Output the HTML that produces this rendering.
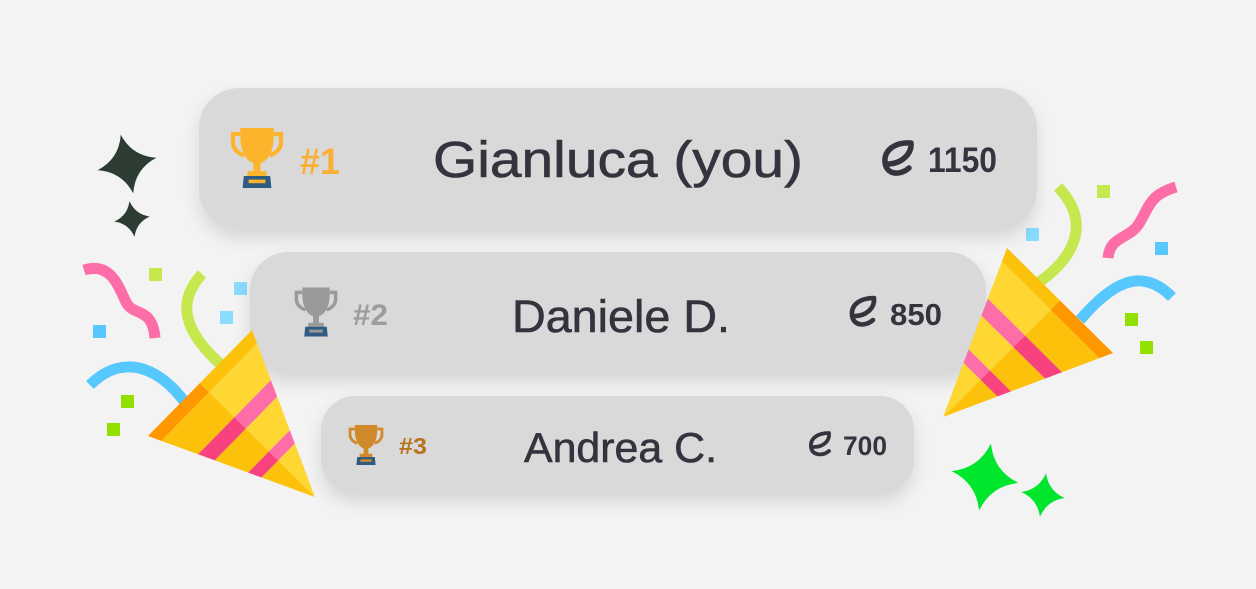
<!DOCTYPE html>
<html><head><meta charset="utf-8"><style>
html,body{margin:0;padding:0;background:#f3f3f3;width:1256px;height:589px;overflow:hidden}
svg{display:block}
</style></head><body>
<svg width="1256" height="589" viewBox="0 0 1256 589" xmlns="http://www.w3.org/2000/svg" font-family="Liberation Sans, sans-serif">
<defs>
<filter id="sh" x="-10%" y="-30%" width="120%" height="170%">
<feDropShadow dx="0" dy="8" stdDeviation="8" flood-color="#000" flood-opacity="0.12"/>
</filter>
<path id="star" d="M0,-1 Q0.22,-0.22 1,0 Q0.22,0.22 0,1 Q-0.22,0.22 -1,0 Q-0.22,-0.22 0,-1Z"/>
</defs>
<rect width="1256" height="589" fill="#f3f3f3"/>

<!-- left decorations -->
<use href="#star" transform="translate(127,164) rotate(-12) scale(30)" fill="#2d3c33"/>
<use href="#star" transform="translate(132,219) rotate(-8) scale(18)" fill="#2d3c33"/>
<path d="M84,270 C110,262 118,285 125,300 C132,318 152,305 155,338" fill="none" stroke="#fd6ea8" stroke-width="11"/>
<path d="M202,274 C178,300 180,330 225,368" fill="none" stroke="#c6e84e" stroke-width="11"/>
<path d="M90,385 C125,350 165,370 190,410" fill="none" stroke="#56c8fe" stroke-width="11"/>
<rect x="149" y="268" width="13" height="13" fill="#c6e84e"/>
<rect x="93" y="325" width="13" height="13" fill="#56c8fe"/>
<rect x="234" y="282" width="13" height="13" fill="#88dcff"/>
<rect x="220" y="311" width="13" height="13" fill="#88dcff"/>
<rect x="121" y="395" width="13" height="13" fill="#92e000"/>
<rect x="107" y="423" width="13" height="13" fill="#92e000"/>

<!-- right decorations -->
<use href="#star" transform="translate(985,477) rotate(10) scale(34)" fill="#00e62c"/>
<use href="#star" transform="translate(1043,495) rotate(8) scale(22)" fill="#00e62c"/>
<path d="M1058,187 C1085,215 1085,250 1038,283" fill="none" stroke="#c6e84e" stroke-width="11"/>
<path d="M1176,187 C1150,195 1150,205 1140,222 C1130,240 1110,235 1108,258" fill="none" stroke="#fd6ea8" stroke-width="11"/>
<path d="M1172,297 C1140,265 1110,285 1080,320" fill="none" stroke="#56c8fe" stroke-width="11"/>
<rect x="1012" y="199" width="13" height="13" fill="#88dcff"/>
<rect x="1026" y="228" width="13" height="13" fill="#88dcff"/>
<rect x="1097" y="185" width="13" height="13" fill="#c6e84e"/>
<rect x="1155" y="242" width="13" height="13" fill="#56c8fe"/>
<rect x="1125" y="313" width="13" height="13" fill="#92e000"/>
<rect x="1140" y="341" width="13" height="13" fill="#92e000"/>

<!-- cards -->
<rect x="199" y="88" width="838" height="142" rx="40" fill="#d9d9d9" filter="url(#sh)"/>
<rect x="250" y="252" width="736" height="122" rx="38" fill="#d9d9d9" filter="url(#sh)"/>
<rect x="321" y="396" width="593" height="98" rx="34" fill="#d9d9d9" filter="url(#sh)"/>

<g id="coneL"></g>
<g id="coneR"></g>

<!-- trophies -->
<g transform="translate(257,158) scale(1.2)">
<path d="M-14,-25 h28 v6 q0,18 -10,23 h-8 q-10,-5 -10,-23z" fill="#fdb42d"/>
<path d="M-14,-20 h-6 v7 q0,7 9,11 M14,-20 h6 v7 q0,7 -9,11" fill="none" stroke="#fdb42d" stroke-width="3.5"/>
<rect x="-3" y="3" width="6" height="9" fill="#fdb42d"/><rect x="-8" y="11" width="16" height="4" fill="#fdb42d"/>
<path d="M-11,15 h22 l1,10 h-24z" fill="#2f5a82"/><rect x="-7" y="18" width="14" height="3" fill="#fdb42d"/>
</g>
<g transform="translate(316,312) scale(0.98)">
<path d="M-14,-25 h28 v6 q0,18 -10,23 h-8 q-10,-5 -10,-23z" fill="#9a9a9a"/>
<path d="M-14,-20 h-6 v7 q0,7 9,11 M14,-20 h6 v7 q0,7 -9,11" fill="none" stroke="#9a9a9a" stroke-width="3.5"/>
<rect x="-3" y="3" width="6" height="9" fill="#9a9a9a"/><rect x="-8" y="11" width="16" height="4" fill="#9a9a9a"/>
<path d="M-11,15 h22 l1,10 h-24z" fill="#2f5a82"/><rect x="-7" y="18" width="14" height="3" fill="#9a9a9a"/>
</g>
<g transform="translate(366,445) scale(0.8)">
<path d="M-14,-25 h28 v6 q0,18 -10,23 h-8 q-10,-5 -10,-23z" fill="#d08a2c"/>
<path d="M-14,-20 h-6 v7 q0,7 9,11 M14,-20 h6 v7 q0,7 -9,11" fill="none" stroke="#d08a2c" stroke-width="3.5"/>
<rect x="-3" y="3" width="6" height="9" fill="#d08a2c"/><rect x="-8" y="11" width="16" height="4" fill="#d08a2c"/>
<path d="M-11,15 h22 l1,10 h-24z" fill="#2f5a82"/><rect x="-7" y="18" width="14" height="3" fill="#d08a2c"/>
</g>

<!-- ranks -->
<text x="300" y="174" font-size="37" font-weight="bold" fill="#fbb034" textLength="40" lengthAdjust="spacingAndGlyphs">#1</text>
<text x="353" y="325" font-size="30" font-weight="bold" fill="#9c9c9c" textLength="35" lengthAdjust="spacingAndGlyphs">#2</text>
<text x="399" y="454" font-size="23" font-weight="bold" fill="#b8731f" textLength="28" lengthAdjust="spacingAndGlyphs">#3</text>

<!-- names -->
<g stroke="#33343d" stroke-width="0.6">
<text x="433" y="177" font-size="51" fill="#33343d" textLength="370" lengthAdjust="spacingAndGlyphs">Gianluca (you)</text>
<text x="512" y="332" font-size="45" fill="#33343d" textLength="218" lengthAdjust="spacingAndGlyphs">Daniele D.</text>
<text x="524" y="462" font-size="42" fill="#33343d" textLength="193" lengthAdjust="spacingAndGlyphs">Andrea C.</text>
</g>

<!-- points -->
<g fill="none" stroke="#33343d" stroke-linecap="round" stroke-linejoin="round">
<path d="M909,168 C900,176 886,175 885,162 C884,150 895,142 911,143 C912,155 900,164 888,164" stroke-width="5.5"/>
<path d="M873,320 C865,327 853,326 852,315 C851,304 861,298 874,298 C875,309 865,316 855,316" stroke-width="4.6"/>
<path d="M829,451 C823,456 812,456 811,447 C810,438 818,433 829,433 C830,442 822,447 814,447" stroke-width="3.8"/>
</g>
<text x="928" y="172" font-size="35" font-weight="bold" fill="#33343d" textLength="69" lengthAdjust="spacingAndGlyphs">1150</text>
<text x="890" y="325" font-size="31" font-weight="bold" fill="#33343d" textLength="52" lengthAdjust="spacingAndGlyphs">850</text>
<text x="843" y="455" font-size="27" font-weight="bold" fill="#33343d" textLength="44" lengthAdjust="spacingAndGlyphs">700</text>
</svg>
<script>
(function(){
var NS="http://www.w3.org/2000/svg";
function lerp(p,q,t){return [p[0]+(q[0]-p[0])*t,p[1]+(q[1]-p[1])*t];}
function poly(g,pts,fill){var e=document.createElementNS(NS,"polygon");e.setAttribute("points",pts.map(function(p){return p.join(",")}).join(" "));e.setAttribute("fill",fill);g.appendChild(e);}
function cone(id,A,B,T){
 var g=document.getElementById(id);
 var M=lerp(A,B,0.5);
 var bands=[[0,0.08,"#ff9800","#fcc10a"],[0.08,0.3,"#fcc10a","#fed733"],[0.3,0.4,"#f8427f","#fd6ea8"],[0.4,0.6,"#fcc10a","#fed733"],[0.6,0.68,"#f8427f","#fd6ea8"],[0.68,1,"#fcc10a","#fed733"]];
 bands.forEach(function(b){
  var a0=lerp(A,T,b[0]),a1=lerp(A,T,b[1]),m0=lerp(M,T,b[0]),m1=lerp(M,T,b[1]),b0=lerp(B,T,b[0]),b1=lerp(B,T,b[1]);
  poly(g,[a0,m0,m1,a1],b[2]);
  poly(g,[m0,b0,b1,m1],b[3]);
 });
}
cone("coneL",[148,436],[252,330],[315,497]);
cone("coneR",[1113,353],[1007,248],[943,417]);
})();
</script>
</body></html>
